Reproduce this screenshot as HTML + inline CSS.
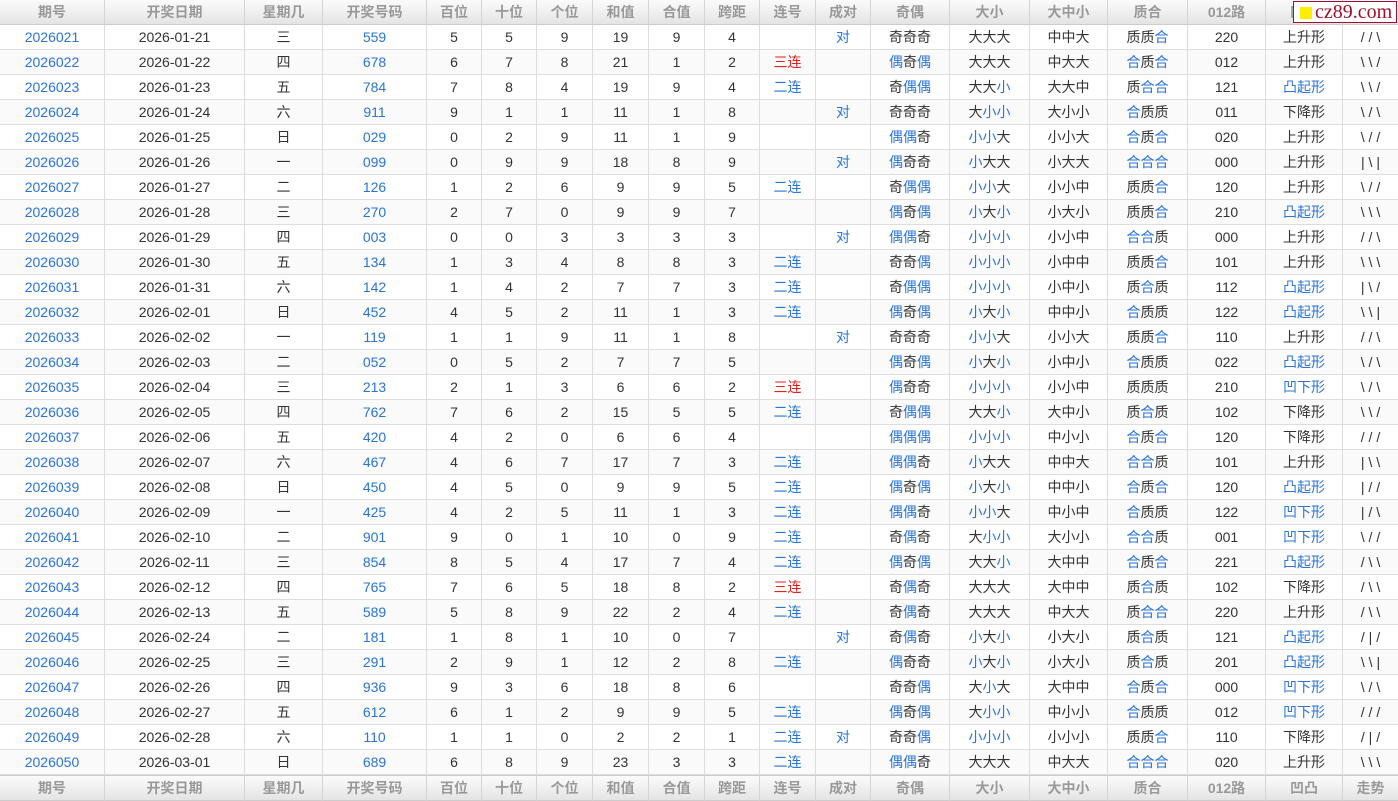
<!DOCTYPE html>
<html><head><meta charset="utf-8">
<style>
html,body{margin:0;padding:0;background:#fff;}
body{width:1398px;height:800px;overflow:hidden;position:relative;font-family:"Liberation Sans","Noto Sans CJK SC",sans-serif;}
table{border-collapse:separate;border-spacing:0;table-layout:fixed;width:1398px;font-size:14px;color:#333;}
td,th{height:24px;padding:0;border-right:1px solid #ddd;border-bottom:1px solid #ddd;text-align:center;white-space:nowrap;overflow:hidden;line-height:24px;}
th{background:linear-gradient(#fbfbfb,#e4e4e4);color:#999;font-weight:bold;border-right:1px solid #d4d4d4;border-bottom:1px solid #ccc;}
tfoot th{border-top:1px solid #ccc;height:23px;}
td:last-child,th:last-child{border-right:none;}
.b,i{color:#2a74d4;font-style:normal;}
.r{color:#e0201a;}
tbody tr:nth-child(even) td{background:#fafafa;}
#wm{position:absolute;left:1293px;top:1px;width:102px;height:20px;border:1px solid #a0102a;background:#fff;font-family:"Liberation Serif",serif;color:#a0102a;font-size:20px;line-height:20px;}
#wm span{display:inline-block;width:12px;height:12px;background:#ffee00;margin:0 3px 0 6px;vertical-align:-1px;}
</style></head><body>
<table>
<colgroup><col style="width:105px"><col style="width:140px"><col style="width:78px"><col style="width:104px"><col style="width:55px"><col style="width:55px"><col style="width:56px"><col style="width:56px"><col style="width:56px"><col style="width:55px"><col style="width:56px"><col style="width:55px"><col style="width:79px"><col style="width:80px"><col style="width:78px"><col style="width:80px"><col style="width:78px"><col style="width:77px"><col style="width:55px"></colgroup>
<thead><tr><th>期号</th><th>开奖日期</th><th>星期几</th><th>开奖号码</th><th>百位</th><th>十位</th><th>个位</th><th>和值</th><th>合值</th><th>跨距</th><th>连号</th><th>成对</th><th>奇偶</th><th>大小</th><th>大中小</th><th>质合</th><th>012路</th><th>凹凸</th><th>走势</th></tr></thead>
<tbody>
<tr><td class="b">2026021</td><td>2026-01-21</td><td>三</td><td class="b">559</td><td>5</td><td>5</td><td>9</td><td>19</td><td>9</td><td>4</td><td></td><td class="b">对</td><td>奇奇奇</td><td>大大大</td><td>中中大</td><td>质质<i>合</i></td><td>220</td><td>上升形</td><td>/ / \</td></tr>
<tr><td class="b">2026022</td><td>2026-01-22</td><td>四</td><td class="b">678</td><td>6</td><td>7</td><td>8</td><td>21</td><td>1</td><td>2</td><td class="r">三连</td><td></td><td><i>偶</i>奇<i>偶</i></td><td>大大大</td><td>中大大</td><td><i>合</i>质<i>合</i></td><td>012</td><td>上升形</td><td>\ \ /</td></tr>
<tr><td class="b">2026023</td><td>2026-01-23</td><td>五</td><td class="b">784</td><td>7</td><td>8</td><td>4</td><td>19</td><td>9</td><td>4</td><td class="b">二连</td><td></td><td>奇<i>偶偶</i></td><td>大大<i>小</i></td><td>大大中</td><td>质<i>合合</i></td><td>121</td><td class="b">凸起形</td><td>\ \ /</td></tr>
<tr><td class="b">2026024</td><td>2026-01-24</td><td>六</td><td class="b">911</td><td>9</td><td>1</td><td>1</td><td>11</td><td>1</td><td>8</td><td></td><td class="b">对</td><td>奇奇奇</td><td>大<i>小小</i></td><td>大小小</td><td><i>合</i>质质</td><td>011</td><td>下降形</td><td>\ / \</td></tr>
<tr><td class="b">2026025</td><td>2026-01-25</td><td>日</td><td class="b">029</td><td>0</td><td>2</td><td>9</td><td>11</td><td>1</td><td>9</td><td></td><td></td><td><i>偶偶</i>奇</td><td><i>小小</i>大</td><td>小小大</td><td><i>合</i>质<i>合</i></td><td>020</td><td>上升形</td><td>\ / /</td></tr>
<tr><td class="b">2026026</td><td>2026-01-26</td><td>一</td><td class="b">099</td><td>0</td><td>9</td><td>9</td><td>18</td><td>8</td><td>9</td><td></td><td class="b">对</td><td><i>偶</i>奇奇</td><td><i>小</i>大大</td><td>小大大</td><td><i>合合合</i></td><td>000</td><td>上升形</td><td>| \ |</td></tr>
<tr><td class="b">2026027</td><td>2026-01-27</td><td>二</td><td class="b">126</td><td>1</td><td>2</td><td>6</td><td>9</td><td>9</td><td>5</td><td class="b">二连</td><td></td><td>奇<i>偶偶</i></td><td><i>小小</i>大</td><td>小小中</td><td>质质<i>合</i></td><td>120</td><td>上升形</td><td>\ / /</td></tr>
<tr><td class="b">2026028</td><td>2026-01-28</td><td>三</td><td class="b">270</td><td>2</td><td>7</td><td>0</td><td>9</td><td>9</td><td>7</td><td></td><td></td><td><i>偶</i>奇<i>偶</i></td><td><i>小</i>大<i>小</i></td><td>小大小</td><td>质质<i>合</i></td><td>210</td><td class="b">凸起形</td><td>\ \ \</td></tr>
<tr><td class="b">2026029</td><td>2026-01-29</td><td>四</td><td class="b">003</td><td>0</td><td>0</td><td>3</td><td>3</td><td>3</td><td>3</td><td></td><td class="b">对</td><td><i>偶偶</i>奇</td><td><i>小小小</i></td><td>小小中</td><td><i>合合</i>质</td><td>000</td><td>上升形</td><td>/ / \</td></tr>
<tr><td class="b">2026030</td><td>2026-01-30</td><td>五</td><td class="b">134</td><td>1</td><td>3</td><td>4</td><td>8</td><td>8</td><td>3</td><td class="b">二连</td><td></td><td>奇奇<i>偶</i></td><td><i>小小小</i></td><td>小中中</td><td>质质<i>合</i></td><td>101</td><td>上升形</td><td>\ \ \</td></tr>
<tr><td class="b">2026031</td><td>2026-01-31</td><td>六</td><td class="b">142</td><td>1</td><td>4</td><td>2</td><td>7</td><td>7</td><td>3</td><td class="b">二连</td><td></td><td>奇<i>偶偶</i></td><td><i>小小小</i></td><td>小中小</td><td>质<i>合</i>质</td><td>112</td><td class="b">凸起形</td><td>| \ /</td></tr>
<tr><td class="b">2026032</td><td>2026-02-01</td><td>日</td><td class="b">452</td><td>4</td><td>5</td><td>2</td><td>11</td><td>1</td><td>3</td><td class="b">二连</td><td></td><td><i>偶</i>奇<i>偶</i></td><td><i>小</i>大<i>小</i></td><td>中中小</td><td><i>合</i>质质</td><td>122</td><td class="b">凸起形</td><td>\ \ |</td></tr>
<tr><td class="b">2026033</td><td>2026-02-02</td><td>一</td><td class="b">119</td><td>1</td><td>1</td><td>9</td><td>11</td><td>1</td><td>8</td><td></td><td class="b">对</td><td>奇奇奇</td><td><i>小小</i>大</td><td>小小大</td><td>质质<i>合</i></td><td>110</td><td>上升形</td><td>/ / \</td></tr>
<tr><td class="b">2026034</td><td>2026-02-03</td><td>二</td><td class="b">052</td><td>0</td><td>5</td><td>2</td><td>7</td><td>7</td><td>5</td><td></td><td></td><td><i>偶</i>奇<i>偶</i></td><td><i>小</i>大<i>小</i></td><td>小中小</td><td><i>合</i>质质</td><td>022</td><td class="b">凸起形</td><td>\ / \</td></tr>
<tr><td class="b">2026035</td><td>2026-02-04</td><td>三</td><td class="b">213</td><td>2</td><td>1</td><td>3</td><td>6</td><td>6</td><td>2</td><td class="r">三连</td><td></td><td><i>偶</i>奇奇</td><td><i>小小小</i></td><td>小小中</td><td>质质质</td><td>210</td><td class="b">凹下形</td><td>\ / \</td></tr>
<tr><td class="b">2026036</td><td>2026-02-05</td><td>四</td><td class="b">762</td><td>7</td><td>6</td><td>2</td><td>15</td><td>5</td><td>5</td><td class="b">二连</td><td></td><td>奇<i>偶偶</i></td><td>大大<i>小</i></td><td>大中小</td><td>质<i>合</i>质</td><td>102</td><td>下降形</td><td>\ \ /</td></tr>
<tr><td class="b">2026037</td><td>2026-02-06</td><td>五</td><td class="b">420</td><td>4</td><td>2</td><td>0</td><td>6</td><td>6</td><td>4</td><td></td><td></td><td><i>偶偶偶</i></td><td><i>小小小</i></td><td>中小小</td><td><i>合</i>质<i>合</i></td><td>120</td><td>下降形</td><td>/ / /</td></tr>
<tr><td class="b">2026038</td><td>2026-02-07</td><td>六</td><td class="b">467</td><td>4</td><td>6</td><td>7</td><td>17</td><td>7</td><td>3</td><td class="b">二连</td><td></td><td><i>偶偶</i>奇</td><td><i>小</i>大大</td><td>中中大</td><td><i>合合</i>质</td><td>101</td><td>上升形</td><td>| \ \</td></tr>
<tr><td class="b">2026039</td><td>2026-02-08</td><td>日</td><td class="b">450</td><td>4</td><td>5</td><td>0</td><td>9</td><td>9</td><td>5</td><td class="b">二连</td><td></td><td><i>偶</i>奇<i>偶</i></td><td><i>小</i>大<i>小</i></td><td>中中小</td><td><i>合</i>质<i>合</i></td><td>120</td><td class="b">凸起形</td><td>| / /</td></tr>
<tr><td class="b">2026040</td><td>2026-02-09</td><td>一</td><td class="b">425</td><td>4</td><td>2</td><td>5</td><td>11</td><td>1</td><td>3</td><td class="b">二连</td><td></td><td><i>偶偶</i>奇</td><td><i>小小</i>大</td><td>中小中</td><td><i>合</i>质质</td><td>122</td><td class="b">凹下形</td><td>| / \</td></tr>
<tr><td class="b">2026041</td><td>2026-02-10</td><td>二</td><td class="b">901</td><td>9</td><td>0</td><td>1</td><td>10</td><td>0</td><td>9</td><td class="b">二连</td><td></td><td>奇<i>偶</i>奇</td><td>大<i>小小</i></td><td>大小小</td><td><i>合合</i>质</td><td>001</td><td class="b">凹下形</td><td>\ / /</td></tr>
<tr><td class="b">2026042</td><td>2026-02-11</td><td>三</td><td class="b">854</td><td>8</td><td>5</td><td>4</td><td>17</td><td>7</td><td>4</td><td class="b">二连</td><td></td><td><i>偶</i>奇<i>偶</i></td><td>大大<i>小</i></td><td>大中中</td><td><i>合</i>质<i>合</i></td><td>221</td><td class="b">凸起形</td><td>/ \ \</td></tr>
<tr><td class="b">2026043</td><td>2026-02-12</td><td>四</td><td class="b">765</td><td>7</td><td>6</td><td>5</td><td>18</td><td>8</td><td>2</td><td class="r">三连</td><td></td><td>奇<i>偶</i>奇</td><td>大大大</td><td>大中中</td><td>质<i>合</i>质</td><td>102</td><td>下降形</td><td>/ \ \</td></tr>
<tr><td class="b">2026044</td><td>2026-02-13</td><td>五</td><td class="b">589</td><td>5</td><td>8</td><td>9</td><td>22</td><td>2</td><td>4</td><td class="b">二连</td><td></td><td>奇<i>偶</i>奇</td><td>大大大</td><td>中大大</td><td>质<i>合合</i></td><td>220</td><td>上升形</td><td>/ \ \</td></tr>
<tr><td class="b">2026045</td><td>2026-02-24</td><td>二</td><td class="b">181</td><td>1</td><td>8</td><td>1</td><td>10</td><td>0</td><td>7</td><td></td><td class="b">对</td><td>奇<i>偶</i>奇</td><td><i>小</i>大<i>小</i></td><td>小大小</td><td>质<i>合</i>质</td><td>121</td><td class="b">凸起形</td><td>/ | /</td></tr>
<tr><td class="b">2026046</td><td>2026-02-25</td><td>三</td><td class="b">291</td><td>2</td><td>9</td><td>1</td><td>12</td><td>2</td><td>8</td><td class="b">二连</td><td></td><td><i>偶</i>奇奇</td><td><i>小</i>大<i>小</i></td><td>小大小</td><td>质<i>合</i>质</td><td>201</td><td class="b">凸起形</td><td>\ \ |</td></tr>
<tr><td class="b">2026047</td><td>2026-02-26</td><td>四</td><td class="b">936</td><td>9</td><td>3</td><td>6</td><td>18</td><td>8</td><td>6</td><td></td><td></td><td>奇奇<i>偶</i></td><td>大<i>小</i>大</td><td>大中中</td><td><i>合</i>质<i>合</i></td><td>000</td><td class="b">凹下形</td><td>\ / \</td></tr>
<tr><td class="b">2026048</td><td>2026-02-27</td><td>五</td><td class="b">612</td><td>6</td><td>1</td><td>2</td><td>9</td><td>9</td><td>5</td><td class="b">二连</td><td></td><td><i>偶</i>奇<i>偶</i></td><td>大<i>小小</i></td><td>中小小</td><td><i>合</i>质质</td><td>012</td><td class="b">凹下形</td><td>/ / /</td></tr>
<tr><td class="b">2026049</td><td>2026-02-28</td><td>六</td><td class="b">110</td><td>1</td><td>1</td><td>0</td><td>2</td><td>2</td><td>1</td><td class="b">二连</td><td class="b">对</td><td>奇奇<i>偶</i></td><td><i>小小小</i></td><td>小小小</td><td>质质<i>合</i></td><td>110</td><td>下降形</td><td>/ | /</td></tr>
<tr><td class="b">2026050</td><td>2026-03-01</td><td>日</td><td class="b">689</td><td>6</td><td>8</td><td>9</td><td>23</td><td>3</td><td>3</td><td class="b">二连</td><td></td><td><i>偶偶</i>奇</td><td>大大大</td><td>中大大</td><td><i>合合合</i></td><td>020</td><td>上升形</td><td>\ \ \</td></tr>
</tbody>
<tfoot><tr><th>期号</th><th>开奖日期</th><th>星期几</th><th>开奖号码</th><th>百位</th><th>十位</th><th>个位</th><th>和值</th><th>合值</th><th>跨距</th><th>连号</th><th>成对</th><th>奇偶</th><th>大小</th><th>大中小</th><th>质合</th><th>012路</th><th>凹凸</th><th>走势</th></tr></tfoot>
</table>
<div id="wm"><span></span>cz89.com</div>
</body></html>
